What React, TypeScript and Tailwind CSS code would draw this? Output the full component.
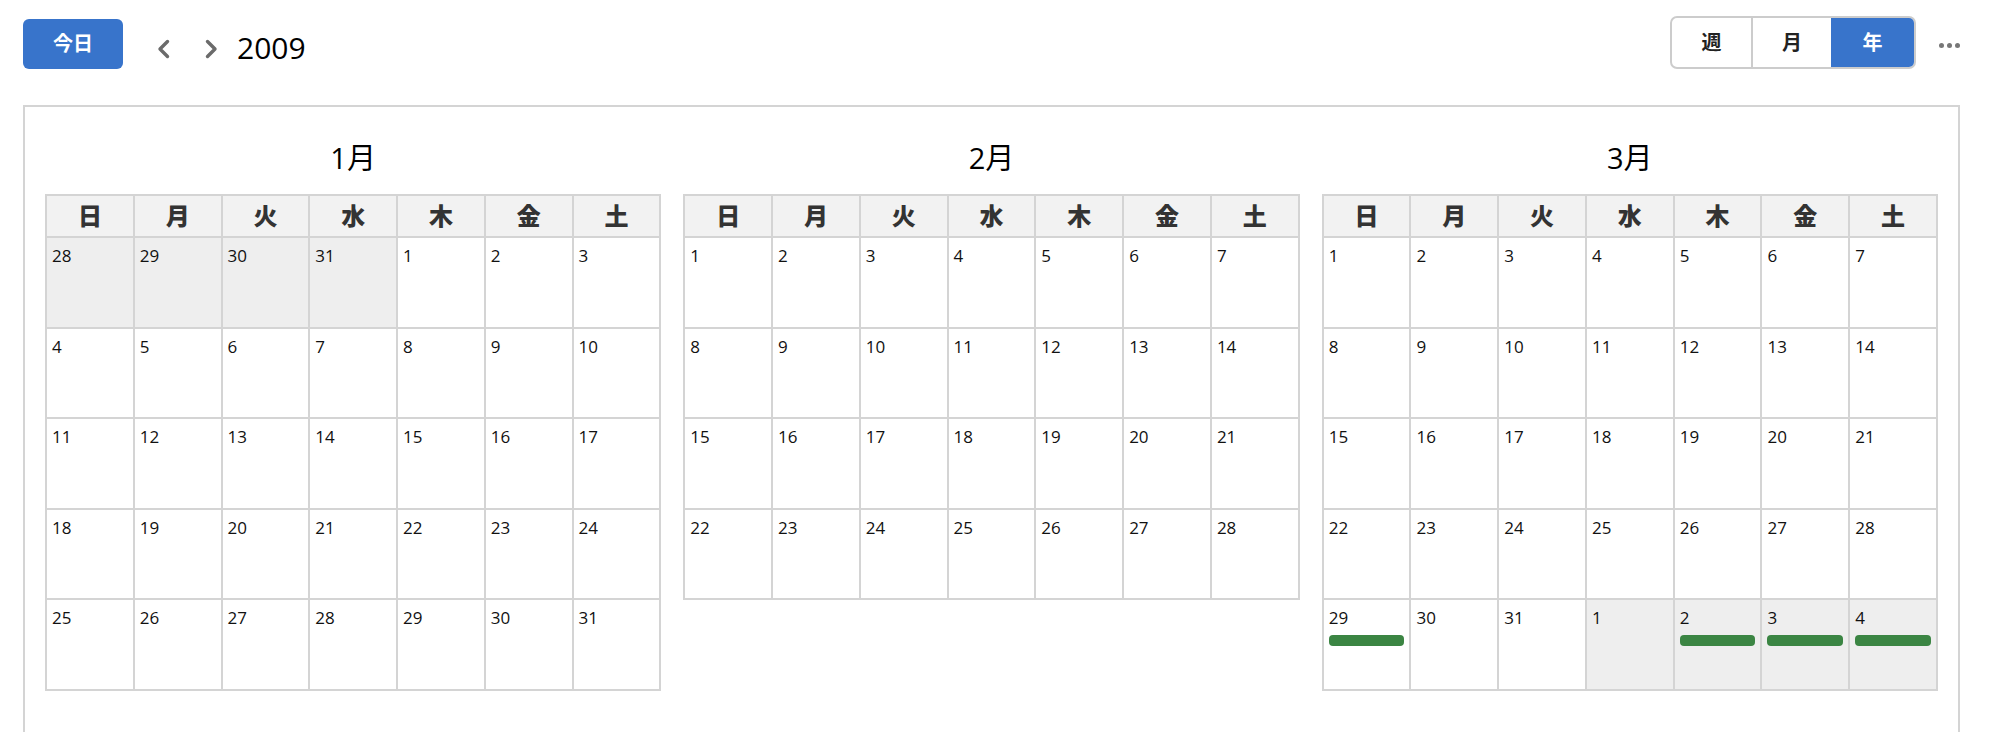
import React from 'react';

type Day = { n: number; other?: boolean; event?: boolean };

const WEEKDAYS = ['日', '月', '火', '水', '木', '金', '土'];

function range(a: number, b: number, extra: Partial<Day> = {}): Day[] {
  const out: Day[] = [];
  for (let i = a; i <= b; i++) out.push({ n: i, ...extra });
  return out;
}

const MONTHS: { title: string; days: Day[] }[] = [
  {
    title: '1月',
    days: [...range(28, 31, { other: true }), ...range(1, 31)],
  },
  {
    title: '2月',
    days: range(1, 28),
  },
  {
    title: '3月',
    days: [
      ...range(1, 28),
      { n: 29, event: true },
      { n: 30 },
      { n: 31 },
      { n: 1, other: true },
      { n: 2, other: true, event: true },
      { n: 3, other: true, event: true },
      { n: 4, other: true, event: true },
    ],
  },
];

function Chevron({ dir }: { dir: 'left' | 'right' }) {
  return (
    <svg width="13" height="20" viewBox="0 0 13 20" className="block">
      <polyline
        points={dir === 'left' ? '10.5,2.5 3,10 10.5,17.5' : '2.5,2.5 10,10 2.5,17.5'}
        fill="none"
        stroke="#6b6b6b"
        strokeWidth="3.4"
        strokeLinecap="round"
        strokeLinejoin="round"
      />
    </svg>
  );
}

function MonthTable({ title, days }: { title: string; days: Day[] }) {
  return (
    <div>
      <div className="text-center text-[29px] leading-[40px] text-black mb-[16px]">{title}</div>
      <div className="grid grid-cols-7 border-l-2 border-t-2 border-[#d4d4d4]">
        {WEEKDAYS.map((w) => (
          <div
            key={w}
            className="h-[42px] flex items-center justify-center bg-[#f2f2f2] border-r-2 border-b-2 border-[#d4d4d4] text-[24px] font-black text-[#333]"
          >
            {w}
          </div>
        ))}
        {days.map((d, i) => (
          <div
            key={i}
            className={`h-[90.6px] border-r-2 border-b-2 border-[#d4d4d4] pt-[6px] ${
              d.other ? 'bg-[#eeeeee]' : 'bg-white'
            }`}
          >
            <div className="pl-[5px] text-[17px] leading-[24px] text-[#111]">{d.n}</div>
            {d.event && <div className="mt-[5px] mx-[5px] h-[11px] rounded-[4px] bg-[#3b8543]" />}
          </div>
        ))}
      </div>
    </div>
  );
}

export default function App() {
  return (
    <div
      className="w-[2000px] h-[732px] overflow-hidden bg-white pl-[23px] pr-[40px]"
      style={{ fontFamily: '"Open Sans", "Noto Sans CJK JP", sans-serif' }}
    >
      <div className="flex items-start justify-between">
        <div className="flex items-start">
          <button className="mt-[19px] w-[100px] h-[50px] rounded-[6px] bg-[#3874cb] text-white text-[20px] font-semibold">
            今日
          </button>
          <div className="mt-[39px] ml-[34px]">
            <Chevron dir="left" />
          </div>
          <div className="mt-[39px] ml-[35px]">
            <Chevron dir="right" />
          </div>
          <div className="mt-[28px] ml-[19px] text-[30px] leading-[40px] text-black">2009</div>
        </div>
        <div className="flex items-start">
          <div className="mt-[16px] h-[53px] flex rounded-[7px] border-2 border-[#cccccc] overflow-hidden">
            <div className="w-[81px] flex items-center justify-center border-r-2 border-[#cccccc] text-[20px] font-semibold text-[#222]">
              週
            </div>
            <div className="w-[78px] flex items-center justify-center text-[20px] font-semibold text-[#222]">
              月
            </div>
            <div className="w-[83px] flex items-center justify-center bg-[#3874cb] text-[20px] font-semibold text-white">
              年
            </div>
          </div>
          <div className="mt-[43px] ml-[23px] flex gap-[3px]">
            <span className="w-[5px] h-[5px] rounded-full bg-[#777]" />
            <span className="w-[5px] h-[5px] rounded-full bg-[#777]" />
            <span className="w-[5px] h-[5px] rounded-full bg-[#777]" />
          </div>
        </div>
      </div>

      <div className="mt-[36px] border-2 border-[#d4d4d4] px-[20px] pt-[31px] pb-[60px]">
        <div className="grid grid-cols-3 gap-[22px] items-start">
          {MONTHS.map((m) => (
            <MonthTable key={m.title} title={m.title} days={m.days} />
          ))}
        </div>
      </div>
    </div>
  );
}
